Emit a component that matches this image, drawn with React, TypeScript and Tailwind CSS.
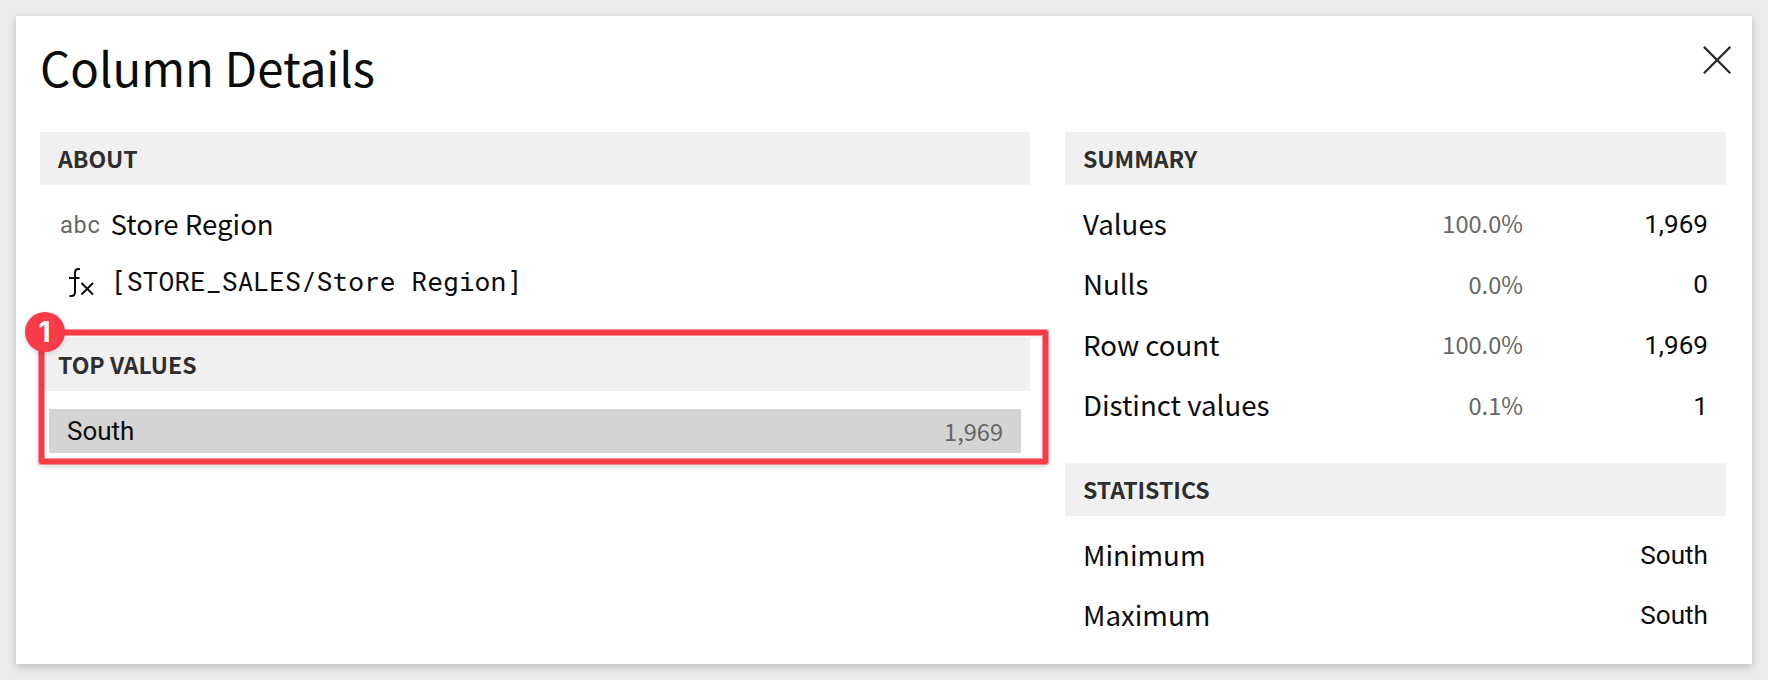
import React from "react";

function SectionHeader({ children }: { children: React.ReactNode }) {
  return (
    <h2 className="flex h-[53px] shrink-0 items-center bg-[#f0f0f0] pl-[18px] text-[23px] leading-[35px] font-semibold text-[#2e2e2e]">
      {children}
    </h2>
  );
}

function Row({ label, percent, value }: { label: string; percent?: string; value: string }) {
  return (
    <div className="flex h-[60.6px] items-center pr-[18px] pl-[18px]">
      <span className="flex-1 text-[27.65px]">{label}</span>
      <span className="w-[140px] text-right text-[23.6px] leading-[36px] text-[#666]">{percent}</span>
      <span className="w-[185px] pt-[2px] text-right font-['Roboto',sans-serif] text-[26.1px]">{value}</span>
    </div>
  );
}

export default function App() {
  return (
    <div className="flex h-[680px] w-[1768px] bg-[#ebebeb] p-4 font-['Noto_Sans_CJK_SC',sans-serif] text-[#0c0c0c]">
      <main className="flex flex-1 flex-col bg-white pr-[26px] pl-6 shadow-[0_3px_8px_rgba(0,0,0,0.2)]">
        <header className="flex h-[116px] shrink-0 justify-between">
          <h1 className="mt-[15px] text-[47.4px] leading-[72px]">Column Details</h1>
          <svg className="mt-[29px] -mr-[6px] h-[30px] w-[30px]" viewBox="0 0 30 30" fill="none" stroke="#292929" strokeWidth="2.2">
            <path d="M1.900 1.900 28.300 28.300M28.300 1.900 1.900 28.300" />
          </svg>
        </header>
        <div className="flex flex-1 gap-[35px]">
          <div className="relative flex w-[990px] flex-col">
            <SectionHeader>ABOUT</SectionHeader>
            <div className="mt-2 flex h-[60px] items-center pl-[19.5px]">
              <span className="w-[51px] pt-[2px] font-['Roboto_Mono',monospace] text-[23px] text-[#666]">abc</span>
              <span className="text-[27.6px] leading-[42px]">Store Region</span>
            </div>
            <div className="flex h-[56px] items-center pl-7">
              <svg className="mt-[4px] h-[32px] w-[28px]" viewBox="0 0 28 32" fill="none" stroke="#0c0c0c" strokeWidth="2">
                <path d="M12 2H10.500Q7 2 7 6V25Q7 29 3.500 29H1.500M1 11H11.500M13.500 16 25 27.500M25 16 13.500 27.500" />
              </svg>
              <span className="ml-[15px] font-['Roboto_Mono',monospace] text-[26.35px] whitespace-pre">[STORE_SALES/Store Region]</span>
            </div>
            <div className="mt-[29px]">
              <SectionHeader>TOP VALUES</SectionHeader>
              <div className="mx-[9px] mt-[18px] flex h-[44px] items-center justify-between bg-[#d4d4d4] px-[18px]">
                <span className="font-['Roboto',sans-serif] text-[26px]">South</span>
                <span className="pb-px text-[23.6px] leading-[36px] text-[#666]">1,969</span>
              </div>
            </div>
            <div className="absolute top-[198px] -left-px h-[134px] w-[1009px] rounded-[2px] border-[5px] border-[#f83b48] shadow-[0_0_0_1px_rgba(248,59,72,0.55),inset_0_0_0_1px_rgba(248,59,72,0.55),0_3px_6px_rgba(0,0,0,0.15),inset_0_3px_4px_rgba(0,0,0,0.06)]" />
            <div className="absolute top-[180px] -left-[15px] flex size-10 items-center justify-center rounded-full bg-[#f83b48] pr-px font-['Inter',sans-serif] text-[28px] font-bold text-white shadow-[0_2px_5px_rgba(0,0,0,0.15)]">
              1
            </div>
          </div>
          <div className="flex flex-1 flex-col">
            <SectionHeader>SUMMARY</SectionHeader>
            <div className="mt-2 mb-[27.6px]">
              <Row label="Values" percent="100.0%" value="1,969" />
              <Row label="Nulls" percent="0.0%" value="0" />
              <Row label="Row count" percent="100.0%" value="1,969" />
              <Row label="Distinct values" percent="0.1%" value="1" />
            </div>
            <SectionHeader>STATISTICS</SectionHeader>
            <div className="mt-2">
              <Row label="Minimum" value="South" />
              <Row label="Maximum" value="South" />
            </div>
          </div>
        </div>
      </main>
    </div>
  );
}
